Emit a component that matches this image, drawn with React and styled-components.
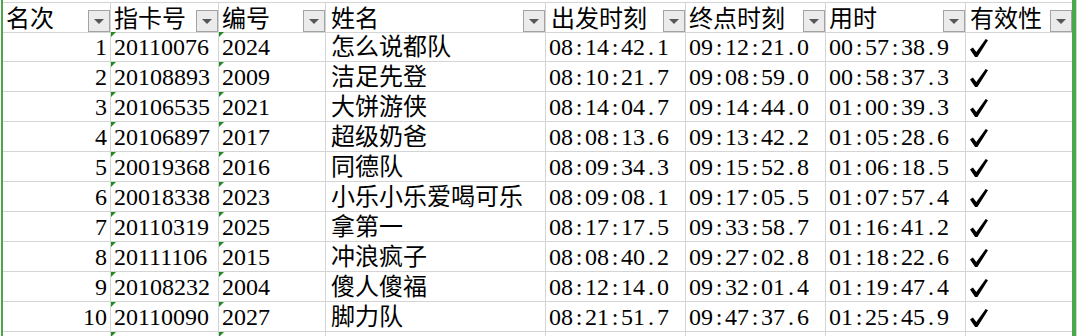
import React from "react";
import styled, { createGlobalStyle } from "styled-components";

const GlobalStyle = createGlobalStyle`
  html, body {
    margin: 0;
    padding: 0;
    background: #ffffff;
    overflow: hidden;
  }
  body {
    font-family: "Liberation Serif", "Noto Sans CJK SC", serif;
  }
`;

const GRID = "#d4d4d4";
const GREEN = "#4aa84a";

const columns = [
  { key: "rank", title: "名次", width: 108, align: "right", pad: 3 },
  { key: "card", title: "指卡号", width: 108, flag: true, pad: 3 },
  { key: "no", title: "编号", width: 107, flag: true, pad: 3 },
  { key: "name", title: "姓名", width: 220, pad: 5 },
  { key: "start", title: "出发时刻", width: 140, mono: true, pad: 3, headPad: 5 },
  { key: "end", title: "终点时刻", width: 140, mono: true, pad: 3 },
  { key: "time", title: "用时", width: 140, mono: true, pad: 3 },
  { key: "valid", title: "有效性", width: 106, check: true, pad: 4, last: true },
];

const rows = [
  ["1", "20110076", "2024", "怎么说都队", "08:14:42.1", "09:12:21.0", "00:57:38.9"],
  ["2", "20108893", "2009", "洁足先登", "08:10:21.7", "09:08:59.0", "00:58:37.3"],
  ["3", "20106535", "2021", "大饼游侠", "08:14:04.7", "09:14:44.0", "01:00:39.3"],
  ["4", "20106897", "2017", "超级奶爸", "08:08:13.6", "09:13:42.2", "01:05:28.6"],
  ["5", "20019368", "2016", "同德队", "08:09:34.3", "09:15:52.8", "01:06:18.5"],
  ["6", "20018338", "2023", "小乐小乐爱喝可乐", "08:09:08.1", "09:17:05.5", "01:07:57.4"],
  ["7", "20110319", "2025", "拿第一", "08:17:17.5", "09:33:58.7", "01:16:41.2"],
  ["8", "20111106", "2015", "冲浪疯子", "08:08:40.2", "09:27:02.8", "01:18:22.6"],
  ["9", "20108232", "2004", "傻人傻福", "08:12:14.0", "09:32:01.4", "01:19:47.4"],
  ["10", "20110090", "2027", "脚力队", "08:21:51.7", "09:47:37.6", "01:25:45.9"],
];

const Sheet = styled.div`
  display: flex;
  width: 1078px;
  height: 336px;
  padding-left: 1px;
  box-sizing: border-box;
`;

const Grid = styled.div`
  display: grid;
  grid-template-columns: ${(p) => p.$cols};
  grid-auto-rows: 30px;
  align-content: start;
  padding-top: 2px;
  border-left: 2px solid ${GREEN};
  border-right: 4px solid ${GREEN};
  font-size: 24px;
  color: #000;
`;

const Rest = styled.div`
  flex: 1;
  border-left: 1px solid ${GRID};
`;

const HeadCell = styled.div`
  box-sizing: border-box;
  height: 31px;
  display: flex;
  justify-content: space-between;
  align-items: flex-start;
  border-top: 1px solid ${GRID};
  border-bottom: 1px solid ${GRID};
  border-right: ${(p) => (p.$last ? "none" : `1px solid ${GRID}`)};
  padding-left: ${(p) => p.$pad}px;
`;

const HeadLabel = styled.span`
  padding-top: 3px;
  line-height: 26px;
  white-space: nowrap;
`;

const FilterButton = styled.span`
  align-self: flex-end;
  flex: none;
  width: 22px;
  height: 22px;
  box-sizing: border-box;
  border: 1px solid #a3a3a3;
  background: #ebebeb;
  display: flex;
  align-items: center;
  justify-content: center;

  &::after {
    content: "";
    margin-top: 1px;
    border-left: 5px solid transparent;
    border-right: 5px solid transparent;
    border-top: 5px solid #565656;
  }
`;

const Cell = styled.div`
  position: relative;
  box-sizing: border-box;
  height: 30px;
  border-bottom: 1px solid ${GRID};
  border-right: ${(p) => (p.$last ? "none" : `1px solid ${GRID}`)};
  padding: 2px ${(p) => (p.$align === "right" ? 3 : 0)}px 0
    ${(p) => (p.$align === "right" ? 0 : p.$pad)}px;
  line-height: 27px;
  text-align: ${(p) => p.$align || "left"};
  white-space: nowrap;

  ${(p) =>
    p.$flag &&
    `
    &::before {
      content: "";
      position: absolute;
      top: 0;
      left: 0;
      border-top: 5px solid #1f8a1f;
      border-right: 5px solid transparent;
    }
  `}
`;

const Char = styled.span`
  display: inline-block;
  width: 0.5em;
  text-align: center;
`;

const CheckWrap = styled.div`
  padding-top: 5px;
`;

const Check = () => (
  <svg width="18" height="18" viewBox="0 0 18 18" style={{ display: "block" }}>
    <path d="M0 10.6 L2.9 8.6 L6.3 13 L15.7 0 L18 1.3 L7.4 18 L5.1 18 Z" fill="#000" />
  </svg>
);

const Mono = ({ text }) =>
  text.split("").map((c, i) => <Char key={i}>{c}</Char>);

export default function App() {
  const cols = columns.map((c) => `${c.width}px`).join(" ");

  return (
    <>
      <GlobalStyle />
      <Sheet>
        <Grid $cols={cols}>
          {columns.map((c) => (
            <HeadCell key={c.key} $pad={c.headPad || c.pad} $last={c.last}>
              <HeadLabel>{c.title}</HeadLabel>
              <FilterButton />
            </HeadCell>
          ))}
          {[...rows, null].map((r, ri) =>
            columns.map((c, ci) => (
              <Cell
                key={`${ri}-${c.key}`}
                $align={c.align}
                $pad={c.pad}
                $flag={c.flag}
                $last={c.last}
              >
                {r &&
                  (c.check ? (
                    <CheckWrap>
                      <Check />
                    </CheckWrap>
                  ) : c.mono ? (
                    <Mono text={r[ci]} />
                  ) : (
                    r[ci]
                  ))}
              </Cell>
            ))
          )}
        </Grid>
        <Rest />
      </Sheet>
    </>
  );
}
